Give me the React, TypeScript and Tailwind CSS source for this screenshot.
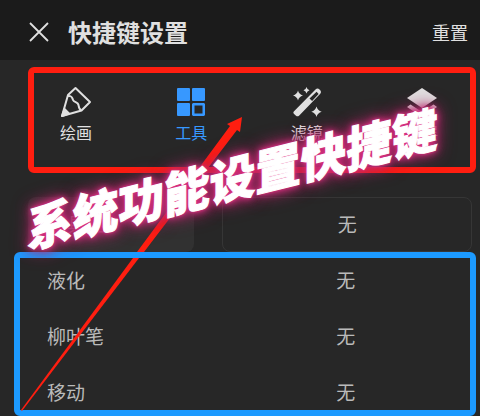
import type { ReactNode } from 'react';

const TABS: { label: string; icon: ReactNode; active?: boolean }[] = [
  {
    label: '绘画',
    icon: (
      <svg viewBox="0 0 32 32" className="size-8" fill="none" stroke="currentColor" strokeWidth="2" strokeLinejoin="round">
        <path d="M2 30 8 9 15.500 2 30 16 21.500 24.500Z" />
        <path d="M8 10c4-.5 4 1.500 5 4s5 2 5.500 5 .5 5 3 5" />
        <path d="M2 30 4.500 23 9 27.500Z" fill="currentColor" />
      </svg>
    ),
  },
  {
    label: '工具',
    active: true,
    icon: (
      <svg viewBox="0 0 32 32" className="size-8" fill="currentColor">
        <rect x="2" y="2" width="13" height="13" rx="1" />
        <rect x="17" y="2" width="13" height="13" rx="1" />
        <rect x="2" y="17" width="13" height="13" rx="1" />
        <path fillRule="evenodd" d="M18 17h11l1 1v11l-1 1H18l-1-1V18Zm1.500 2.500v8h8v-8Z" />
      </svg>
    ),
  },
  {
    label: '滤镜',
    icon: (
      <svg viewBox="0 0 32 32" className="size-8" fill="currentColor">
        <path
          fillRule="evenodd"
          d="M2.800 25.500 24.500 3.500q2-2 4 0l.8.8q1.500 1.800 0 3.500L8 29.800q-1.500 1-3 0l-2.200-2q-1-1.300 0-2.300ZM18.500 12.500l2.600 2.600 6.500-7-2-2.300Z"
        />
        <path d="M7 4.500q.8 3.700 5 5-4.200 1.300-5 5-.8-3.700-5-5 4.200-1.300 5-5ZM15.500 1q.5 2.500 3 3.200-2.500.7-3 3.200-.5-2.500-3-3.200 2.500-.7 3-3.200ZM25.500 20.500q1 4 5.200 5.200-4.200 1.200-5.200 5.200-1-4-5.200-5.200 4.200-1.200 5.200-5.200Z" />
      </svg>
    ),
  },
  {
    label: '图层',
    icon: (
      <svg viewBox="0 0 32 32" className="size-8" fill="currentColor">
        <path d="M16 2 31 12 16 22 1 12Z" />
        <path d="M4.500 18.500 16 26l11.500-7.500L31 21 16 31 1 21Z" />
      </svg>
    ),
  },
];

const SHORTCUTS = [
  { name: '液化', value: '无' },
  { name: '柳叶笔', value: '无' },
  { name: '移动', value: '无' },
];

export default function App() {
  return (
    <div className="relative overflow-hidden bg-[#272727] font-['Noto_Sans_CJK_SC',sans-serif] text-[#e0e0e0]">
      <header className="flex h-15 items-center bg-[#1b1b1b] pt-1 pr-3 pl-7">
        <button aria-label="关闭">
          <svg viewBox="0 0 24 24" className="size-6" fill="none" stroke="currentColor" strokeWidth="1.800">
            <path d="M2 3 20 21M20 3 2 21" />
          </svg>
        </button>
        <h1 className="ml-4 flex-1 text-2xl font-bold">快捷键设置</h1>
        <button className="text-lg">重置</button>
      </header>

      {/* Tabs */}
      <nav className="mt-[7px] mr-1 ml-7 flex justify-between rounded-md border-6 border-[#ff1e10] pt-[13px] pr-[18px] pb-[21px] pl-3">
        {TABS.map((tab) => (
          <button
            key={tab.label}
            className={`flex w-15 flex-col items-center text-base leading-7 ${tab.active ? 'text-[#3798ff]' : ''}`}
          >
            {tab.icon}
            {tab.label}
          </button>
        ))}
      </nav>

      {/* Column header */}
      <div className="mt-6 mr-2 ml-7 grid h-[55px] grid-cols-[2fr_3fr] gap-7 text-[19px] text-[#bababa]">
        <div className="flex items-center rounded-lg bg-[#313131] pl-5 text-[#8a8a8a]">工具栏</div>
        <button className="rounded-lg border border-[#363636]">无</button>
      </div>

      {/* Shortcuts */}
      <ul className="mr-1 ml-3.5 flex flex-col gap-5 rounded-md border-6 border-[#1c9aff] pt-1 text-[19px] text-[#bababa]">
        {SHORTCUTS.map((s) => (
          <li key={s.name} className="grid h-9 grid-cols-[2fr_3fr] items-center gap-7 pl-2">
            <span className="pl-[19px]">{s.name}</span>
            <button>{s.value}</button>
          </li>
        ))}
      </ul>

      {/* Arrow from the list up to the tabs, broken where it passes behind the list border */}
      <svg viewBox="0 0 480 416" className="pointer-events-none absolute inset-0 w-full" fill="#ff1e10">
        <path d="M242 117 227 124 230 126 137 252H144L237 130 240 132Z" />
        <path d="M133 258H139L22 411 21 410Z" />
      </svg>

      {/* Banner */}
      <p className="pointer-events-none absolute top-[154px] left-4 -rotate-14 text-[47px] leading-none font-black whitespace-nowrap text-white italic [-webkit-text-stroke:1px_white] [text-shadow:0_0_3px_#e83a8c,0_0_6px_#d0307c,0_0_10px_#d0307c,0_0_16px_#b02868,0_0_20px_#a02060]">
        系统功能设置快捷键
      </p>
    </div>
  );
}
